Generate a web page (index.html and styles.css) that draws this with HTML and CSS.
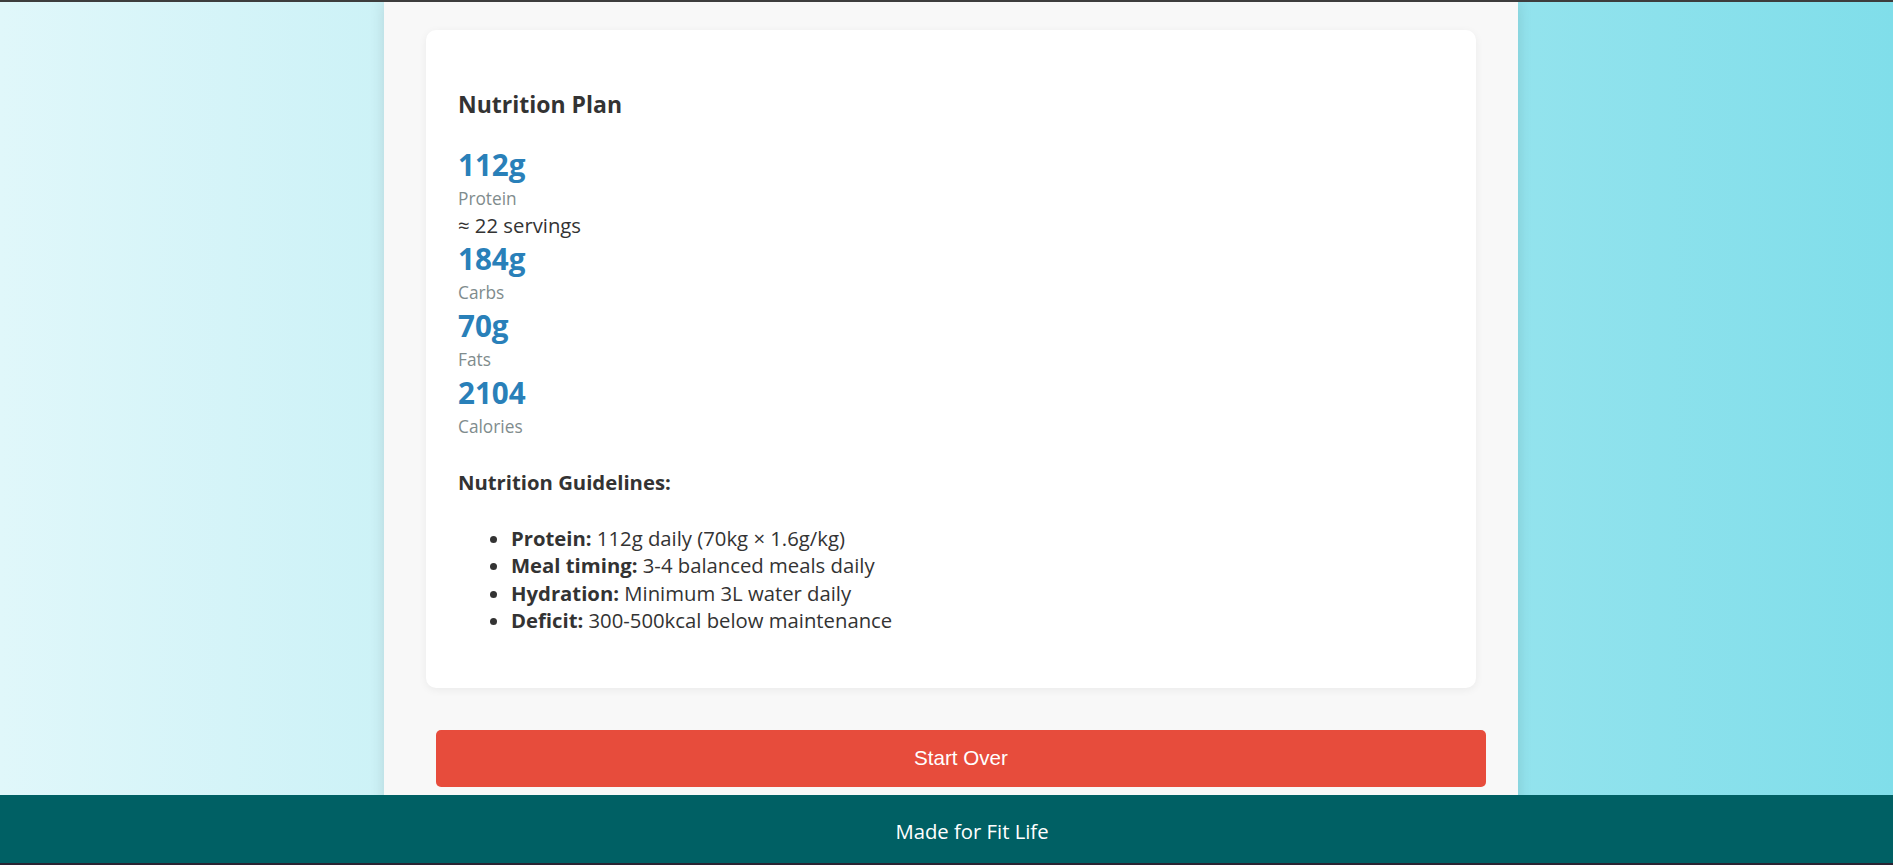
FILE: index.html
```html
<!DOCTYPE html>
<html lang="en">
<head>
<meta charset="utf-8">
<title>Nutrition Plan</title>
<link rel="stylesheet" href="styles.css">
</head>
<body>
<div class="page">
  <main class="container">
    <section class="card">
      <h3 class="card-title">Nutrition Plan</h3>
      <div class="stats">
        <div class="stat">
          <div class="stat-value">112g</div>
          <div class="stat-label">Protein</div>
          <div class="stat-note">≈ 22 servings</div>
        </div>
        <div class="stat">
          <div class="stat-value">184g</div>
          <div class="stat-label">Carbs</div>
        </div>
        <div class="stat">
          <div class="stat-value">70g</div>
          <div class="stat-label">Fats</div>
        </div>
        <div class="stat">
          <div class="stat-value">2104</div>
          <div class="stat-label">Calories</div>
        </div>
      </div>
      <p class="guidelines-title"><strong>Nutrition Guidelines:</strong></p>
      <ul class="guidelines">
        <li><strong>Protein:</strong> 112g daily (70kg × 1.6g/kg)</li>
        <li><strong>Meal timing:</strong> 3-4 balanced meals daily</li>
        <li><strong>Hydration:</strong> Minimum 3L water daily</li>
        <li><strong>Deficit:</strong> 300-500kcal below maintenance</li>
      </ul>
    </section>
    <button class="restart-btn" type="button">Start Over</button>
  </main>
</div>
<footer class="site-footer">Made for Fit Life</footer>
</body>
</html>
```

FILE: styles.css
```css
* {
  box-sizing: border-box;
}

html, body {
  margin: 0;
  padding: 0;
}

body {
  font-family: "Open Sans", "Noto Sans", "DejaVu Sans", sans-serif;
  font-size: 20.3px;
  line-height: 27.5px;
  color: #333;
  min-height: 100vh;
  border-top: 2px solid #3d3d3d;
  background: linear-gradient(to right, #e0f7fa 0%, #80deea 100%);
  overflow: hidden;
}

.page {
  padding-left: 9px;
}

.container {
  width: 1134px;
  margin: 0 auto;
  min-height: calc(100vh - 2px);
  background: #f8f8f8;
  padding: 28px 42px 90px;
  box-shadow: 0 0 14px rgba(0, 0, 0, 0.12);
}

.card {
  background: #fff;
  border-radius: 10px;
  padding: 32px 32px 32px;
  box-shadow: 0 2px 8px rgba(0, 0, 0, 0.06);
}

.card-title {
  margin: 27px 0 26px;
  font-size: 23px;
  line-height: 30px;
  font-weight: 700;
  color: #333;
}

.stat-value {
  font-size: 29.6px;
  line-height: 36px;
  font-weight: 700;
  color: #2980b9;
  padding-top: 2px;
  margin-bottom: 2px;
}

.stat-label {
  font-size: 17.3px;
  line-height: 27px;
  color: #7f8c8d;
}

.stat-note {
  font-size: 20.3px;
  line-height: 27px;
  color: #333;
}

.guidelines-title {
  margin: 29px 0 0;
}

.guidelines-title strong {
  font-weight: 700;
}

.guidelines {
  margin: 28px 0 21px;
  padding-left: 53px;
}

.guidelines strong {
  font-weight: 700;
}

.restart-btn {
  display: block;
  width: 100%;
  height: 57px;
  margin: 42px 10px 0;
  padding: 0;
  border: none;
  border-radius: 5px;
  background: #e74c3c;
  color: #fff;
  font-family: "Liberation Sans", Arial, sans-serif;
  font-size: 20.6px;
  cursor: pointer;
}

.site-footer {
  position: fixed;
  left: 0;
  right: 0;
  bottom: 0;
  height: 70px;
  padding: 4px 0 0 51px;
  line-height: 64px;
  text-align: center;
  background: #006064;
  color: #fff;
  font-size: 20.3px;
  border-bottom: 2px solid #2a2433;
}
```
